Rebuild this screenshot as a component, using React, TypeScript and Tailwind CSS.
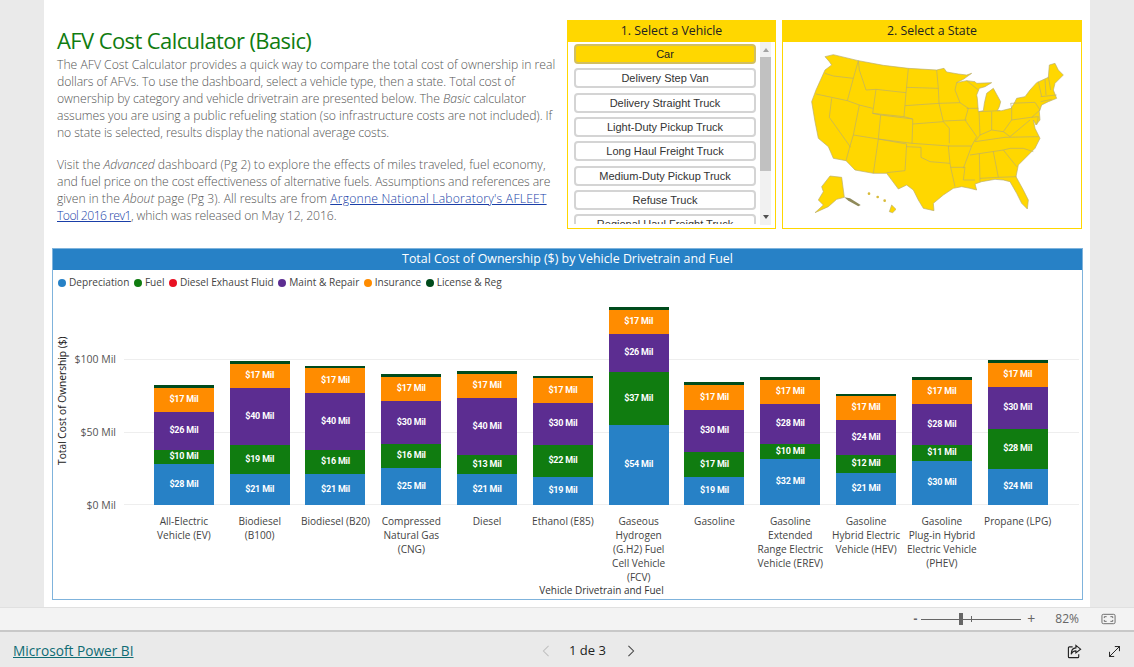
import { MoveDiagonal } from "lucide-react";

const uiFont = "font-['Open_Sans','Noto_Sans',sans-serif]";

const vehicles = [
  "Car",
  "Delivery Step Van",
  "Delivery Straight Truck",
  "Light-Duty Pickup Truck",
  "Long Haul Freight Truck",
  "Medium-Duty Pickup Truck",
  "Refuse Truck",
  "Regional Haul Freight Truck",
];

const legend = [
  { name: "Depreciation", color: "bg-[#2781c6]" },
  { name: "Fuel", color: "bg-[#107c10]" },
  { name: "Diesel Exhaust Fluid", color: "bg-[#e81123]" },
  { name: "Maint & Repair", color: "bg-[#5c2d91]" },
  { name: "Insurance", color: "bg-[#ff8c00]" },
  { name: "License & Reg", color: "bg-[#004b1c]" },
];

// y pixel of each segment's edge, top to bottom: license, insurance, maint, fuel; baseline is 505
const bars = [
  { label: ["All-Electric", "Vehicle (EV)"], ys: [385, 388, 412, 450, 464], vals: [17, 26, 10, 28] },
  { label: ["Biodiesel", "(B100)"], ys: [361, 364, 388, 445, 474], vals: [17, 40, 19, 21] },
  { label: ["Biodiesel (B20)"], ys: [366, 368, 393, 450, 474], vals: [17, 40, 16, 21] },
  { label: ["Compressed", "Natural Gas", "(CNG)"], ys: [374, 377, 401, 444, 468], vals: [17, 30, 16, 25] },
  { label: ["Diesel"], ys: [371, 374, 398, 455, 474], vals: [17, 40, 13, 21] },
  { label: ["Ethanol (E85)"], ys: [376, 378, 403, 445, 477], vals: [17, 30, 22, 19] },
  { label: ["Gaseous", "Hydrogen", "(G.H2) Fuel", "Cell Vehicle", "(FCV)"], ys: [307, 310, 334, 372, 425], vals: [17, 26, 37, 54] },
  { label: ["Gasoline"], ys: [382, 385, 410, 452, 477], vals: [17, 30, 17, 19] },
  { label: ["Gasoline", "Extended", "Range Electric", "Vehicle (EREV)"], ys: [377, 380, 404, 444, 459], vals: [17, 28, 10, 32] },
  { label: ["Gasoline", "Hybrid Electric", "Vehicle (HEV)"], ys: [394, 396, 420, 455, 473], vals: [17, 24, 12, 21] },
  { label: ["Gasoline", "Plug-in Hybrid", "Electric Vehicle", "(PHEV)"], ys: [377, 380, 404, 445, 461], vals: [17, 28, 11, 30] },
  { label: ["Propane (LPG)"], ys: [360, 363, 387, 429, 469], vals: [17, 30, 28, 24] },
];

const segColors = ["bg-[#ff8c00]", "bg-[#5c2d91]", "bg-[#107c10]", "bg-[#2781c6]"];

function UsMap() {
  const borders = [
    "M105 100 130 108 190 115",
    "M205 62 190 115 172 182",
    "M78 162 172 182 208 195 248 205",
    "M125 175 118 232 182 322",
    "M208 195 190 285 178 325 168 362",
    "M248 220 272 225 265 296",
    "M190 285 265 297 350 312",
    "M265 297 250 400",
    "M205 62 208 90 228 150 258 148",
    "M258 148 348 158",
    "M355 85 348 158 342 230",
    "M258 148 248 220 342 230",
    "M350 142 445 145",
    "M440 90 445 145 447 190",
    "M345 197 447 190",
    "M342 230 368 237 368 252",
    "M272 225 368 237",
    "M447 190 460 245",
    "M368 252 460 245 478 265 478 310",
    "M368 252 366 310",
    "M265 297 366 310 478 318",
    "M350 312 345 392 290 398",
    "M348 320 393 322 393 352 420 365 480 370 475 318",
    "M480 370 482 382 495 440",
    "M475 318 545 318 520 385",
    "M482 382 525 382 520 420 555 420",
    "M500 128 495 150 510 188 447 190",
    "M460 243 530 240",
    "M510 188 535 205 525 240 560 290 545 318",
    "M530 205 565 205",
    "M530 122 565 150",
    "M567 215 570 285 555 305",
    "M605 215 605 270",
    "M565 215 630 212",
    "M665 205 665 240 640 275 605 270 570 285",
    "M555 305 645 292 745 290",
    "M640 275 660 290 690 265 720 240",
    "M540 345 640 330 660 325 700 325 730 335",
    "M568 342 570 425",
    "M610 335 625 412",
    "M640 330 680 380",
    "M570 415 625 412 680 410",
    "M665 240 722 232 745 230 740 255",
    "M665 205 662 190 735 187 750 210 725 232",
    "M745 125 755 170",
    "M765 118 768 165",
    "M775 110 782 150",
    "M752 170 800 165",
    "M752 185 785 178",
  ];
  return (
    <svg viewBox="0 0 840 555" className="w-[280px] h-[185px]">
      <path
        d="M105 50 130 44 205 62 280 76 355 85 440 90 462 85 470 96 505 102 530 105 545 100 520 118 500 128 530 122 555 125 560 130 605 128 585 140 568 145 560 165 562 175 565 215 580 212 583 190 590 160 610 145 632 185 628 200 622 212 635 212 663 205 675 185 680 175 705 170 720 150 740 128 775 112 778 75 795 70 805 90 820 105 795 130 790 150 800 175 775 185 755 195 748 215 750 240 738 255 730 240 735 265 750 295 735 325 715 345 685 375 678 410 700 450 715 480 712 507 695 490 680 460 660 425 640 420 615 418 575 425 555 432 560 450 540 445 515 440 490 445 460 465 430 490 432 512 400 505 385 480 370 450 350 435 325 447 290 400 250 400 195 390 168 362 130 355 115 320 85 295 75 245 65 185 78 150 105 90 125 75 118 65Z"
        fill="#ffd700"
        stroke="#b9ad6e"
        strokeWidth="2"
      />
      {borders.map((d) => (
        <path key={d} d={d} fill="none" stroke="#b9ad6e" strokeWidth="2" />
      ))}
      <path d="M95 440 120 408 155 412 163 472 140 478 115 500 75 518 100 495 85 480 100 455Z" fill="#ffd700" stroke="#b9ad6e" strokeWidth="2" />
      <path d="M163 472 180 475 212 495 205 499 175 482Z" fill="#8f8a5a" />
      <path d="M305 495 318 508 308 518 298 515Z" fill="#ffd700" stroke="#b9ad6e" strokeWidth="2" />
      <circle cx="237" cy="461" r="4" fill="#d8bb3a" />
      <circle cx="263" cy="471" r="4" fill="#d8bb3a" />
      <circle cx="284" cy="482" r="4" fill="#d8bb3a" />
    </svg>
  );
}

function VehiclePanel() {
  return (
    <div className="w-[209px] h-[209px] border border-[#ffd700] flex flex-col">
      <div className="h-[21px] shrink-0 bg-[#ffd700] text-[12.3px] leading-[19px] text-center text-[#222]">
        1. Select a Vehicle
      </div>
      <div className="flex flex-1 pl-[6px] pr-[4px] min-h-0">
        <div className="w-[182px] h-[182px] pt-[2px] flex flex-col gap-[4.35px] overflow-hidden font-['Liberation_Sans',sans-serif]">
          {vehicles.map((v, i) => (
            <div
              key={v}
              className={
                i === 0
                  ? "h-[20px] shrink-0 rounded-[4px] border-2 border-[#d2bf60] bg-[#ffd700] text-[11px] leading-[16px] text-center text-[#222]"
                  : "h-[20px] shrink-0 rounded-[4px] border-2 border-[#d4d4d4] bg-white text-[11px] leading-[16px] text-center text-[#333]"
              }
            >
              {v}
            </div>
          ))}
        </div>
        <div className="ml-[4px] w-[11px] h-[183px] bg-[#f1f1f1] flex flex-col items-center">
          <div className="h-[15px] shrink-0 flex items-center justify-center">
            <div className="w-0 h-0 border-x-[3px] border-x-transparent border-b-[4px] border-b-[#a3a3a3]" />
          </div>
          <div className="w-full h-[114px] bg-[#c1c1c1]" />
          <div className="flex-1 flex items-end pb-[6px]">
            <div className="w-0 h-0 border-x-[3px] border-x-transparent border-t-[4px] border-t-[#505050]" />
          </div>
        </div>
      </div>
    </div>
  );
}

function StatePanel() {
  return (
    <div className="w-[300px] h-[209px] border border-[#ffd700] flex flex-col">
      <div className="h-[21px] shrink-0 bg-[#ffd700] text-[12.3px] leading-[19px] text-center text-[#222]">
        2. Select a State
      </div>
      <div className="flex-1 pl-[7px] -mt-[2px]">
        <UsMap />
      </div>
    </div>
  );
}

function StackedBar({ ys, vals }: { ys: number[]; vals: number[] }) {
  const edges = [...ys.slice(1), 505];
  return (
    <div className="w-[60px] flex flex-col">
      <div className="bg-[#004b1c]" style={{ height: ys[1] - ys[0] }} />
      {vals.map((v, i) => (
        <div
          key={i}
          className={`${segColors[i]} flex items-center justify-center text-white font-['Roboto',sans-serif] font-bold text-[9px] tracking-[-0.2px]`}
          style={{ height: edges[i + 1] - edges[i] }}
        >
          ${v} Mil
        </div>
      ))}
    </div>
  );
}

function CostChart() {
  return (
    <div className="relative w-[1031px] h-[352px] border border-[#7fb3dc] flex flex-col">
      <div className="h-[21px] shrink-0 bg-[#2781c6] text-white text-[12.4px] leading-[19px] text-center">
        Total Cost of Ownership ($) by Vehicle Drivetrain and Fuel
      </div>

      <div className="flex items-center gap-[4.5px] pl-[5px] pt-[1px] h-[25px] shrink-0 text-[10.1px] text-[#444]">
        {legend.map((l) => (
          <div key={l.name} className="flex items-center gap-[3px]">
            <span className={`w-[8px] h-[8px] rounded-full ${l.color}`} />
            {l.name}
          </div>
        ))}
      </div>

      {/* plot runs y 295 to 505 */}
      <div className="relative h-[210px] shrink-0">
        <div className="absolute left-[71px] right-[3px] top-[64px] h-px bg-[#eeeeee]" />
        <div className="absolute left-[71px] right-[3px] top-[137px] h-px bg-[#eeeeee]" />
        <div className="absolute left-[71px] right-[3px] top-[209px] h-px bg-[#eeeeee]" />
        <div className="absolute right-[966px] top-[57px] text-[10.5px] leading-[14px] text-[#555] whitespace-nowrap">$100 Mil</div>
        <div className="absolute right-[966px] top-[130px] text-[10.5px] leading-[14px] text-[#555] whitespace-nowrap">$50 Mil</div>
        <div className="absolute right-[966px] top-[203px] text-[10.5px] leading-[14px] text-[#555] whitespace-nowrap">$0 Mil</div>
        <div className="absolute left-[2px] top-[46px] h-[120px] w-[14px] flex items-center justify-center">
          <div className="-rotate-90 whitespace-nowrap text-[10.2px] text-[#222]">Total Cost of Ownership ($)</div>
        </div>
        <div className="absolute inset-0 pl-[93px] grid grid-cols-[repeat(12,75.8px)] items-end">
          {bars.map((b) => (
            <div key={b.label.join()} className="flex justify-center">
              <StackedBar ys={b.ys} vals={b.vals} />
            </div>
          ))}
        </div>
      </div>

      <div className="pl-[93px] pt-[9px] grid grid-cols-[repeat(12,75.8px)] text-[10.1px] leading-[14px] text-[#444] text-center">
        {bars.map((b) => (
          <div key={b.label.join()} className="whitespace-nowrap">
            {b.label.map((line) => (
              <div key={line}>{line}</div>
            ))}
          </div>
        ))}
      </div>

      <div className="absolute bottom-[2px] left-0 right-0 text-center pl-[68px] text-[10px] leading-[14px] text-[#333] whitespace-nowrap">
        Vehicle Drivetrain and Fuel
      </div>
    </div>
  );
}

function FitIcon() {
  return (
    <svg viewBox="0 0 16 12" className="w-[15px] h-[12px]" fill="none" stroke="#666" strokeWidth="1">
      <rect x="1" y="1" width="14" height="10" rx="1.5" />
      <path d="M3.5 5V3.5H6M10 3.5h2.5V5M12.5 7v1.5H10M6 8.5H3.5V7" />
    </svg>
  );
}

function ShareIcon() {
  return (
    <svg viewBox="0 0 16 16" className="w-[15px] h-[15px]" fill="none" stroke="#222" strokeWidth="1.2">
      <path d="M6 3H2.5A1 1 0 0 0 1.5 4v9.5a1 1 0 0 0 1 1h9a1 1 0 0 0 1-1V11" />
      <path d="M9.5 1.5 14.5 5.5 9.5 9.5V7.3C7 7.3 5.5 8.3 4.5 11c0-4 2-6.8 5-6.9Z" />
    </svg>
  );
}

export default function App() {
  return (
    <div className={`${uiFont} w-[1134px] h-[667px] overflow-hidden bg-[#eaeaea] flex flex-col`}>
      <main className="ml-[44px] w-[1046px] h-[607px] shrink-0 bg-white pt-[20px] pl-[8px]">
        <div className="flex">
          <div className="w-[515px] pl-[5px] pt-[6px] shrink-0">
            <h1 className="text-[22px] leading-[29.6px] tracking-[-0.6px] text-[#107c10] whitespace-nowrap">AFV Cost Calculator (Basic)</h1>
            <div className="text-[12.2px] leading-[17.2px] font-light text-[#555] whitespace-nowrap">
              <p>
                The AFV Cost Calculator provides a quick way to compare the total cost of ownership in real
                <br />
                <span className="tracking-[-0.07px]">dollars of AFVs. To use the dashboard, select a vehicle type, then a state. Total cost of</span>
                <br />
                <span className="tracking-[-0.05px]">
                  ownership by category and vehicle drivetrain are presented below. The <i>Basic</i> calculator
                </span>
                <br />
                <span className="tracking-[-0.05px]">assumes you are using a public refueling station (so infrastructure costs are not included). If</span>
                <br />
                <span className="tracking-[-0.08px]">no state is selected, results display the national average costs.</span>
              </p>
              <p className="mt-[14px]">
                Visit the <i>Advanced</i> dashboard (Pg 2) to explore the effects of miles traveled, fuel economy,
                <br />
                <span className="tracking-[-0.08px]">and fuel price on the cost effectiveness of alternative fuels. Assumptions and references are</span>
                <br />
                given in the <i>About</i> page (Pg 3). All results are from{" "}
                <a href="#" className="text-[#1a3fa8] underline">
                  <span className="tracking-[0.2px]">Argonne National Laboratory's AFLEET</span>
                  <br />
                  <span className="tracking-[-0.55px]">Tool 2016 rev1</span>
                </a>
                <span className="tracking-[-0.08px]">, which was released on May 12, 2016.</span>
              </p>
            </div>
          </div>
          <div className="flex gap-[6px]">
            <VehiclePanel />
            <StatePanel />
          </div>
        </div>
        <div className="mt-[19px]">
          <CostChart />
        </div>
      </main>

      <div className="h-[23px] shrink-0 border-t border-[#e0e0e0] bg-[#f3f3f3] flex items-center justify-end pr-[18px] text-[#666]">
        <span className="text-[12px] font-bold mr-[4px]">-</span>
        <div className="relative w-[100px] h-px bg-[#666] mr-[6px]">
          <div className="absolute left-[38px] -top-[6px] w-[4px] h-[12px] bg-[#666]" />
          <div className="absolute left-[50px] -top-[3px] w-px h-[6px] bg-[#666]" />
        </div>
        <span className="text-[14px] leading-none mr-[20px]">+</span>
        <span className="text-[12px] mr-[22px]">82%</span>
        <FitIcon />
      </div>

      <footer className="flex-1 border-t-2 border-[#c8c8c8] flex items-center pt-[3px] pl-[13px] pr-[11px]">
        <a href="#" className="w-[529px] text-[13.7px] text-[#0f6c74] underline whitespace-nowrap">
          Microsoft Power BI
        </a>
        <svg viewBox="0 0 8 14" className="w-[8px] h-[12px]" fill="none" stroke="#c0c0c0" strokeWidth="1.2">
          <path d="M7 1 1 7l6 6" />
        </svg>
        <span className="ml-[19px] text-[13px] text-[#222] font-medium">1 de 3</span>
        <svg viewBox="0 0 8 14" className="ml-[21px] w-[8px] h-[12px]" fill="none" stroke="#444" strokeWidth="1.2">
          <path d="M1 1l6 6-6 6" />
        </svg>
        <div className="ml-auto flex items-center gap-[24px]">
          <ShareIcon />
          <MoveDiagonal size={17} strokeWidth={1.4} color="#222" />
        </div>
      </footer>
    </div>
  );
}
